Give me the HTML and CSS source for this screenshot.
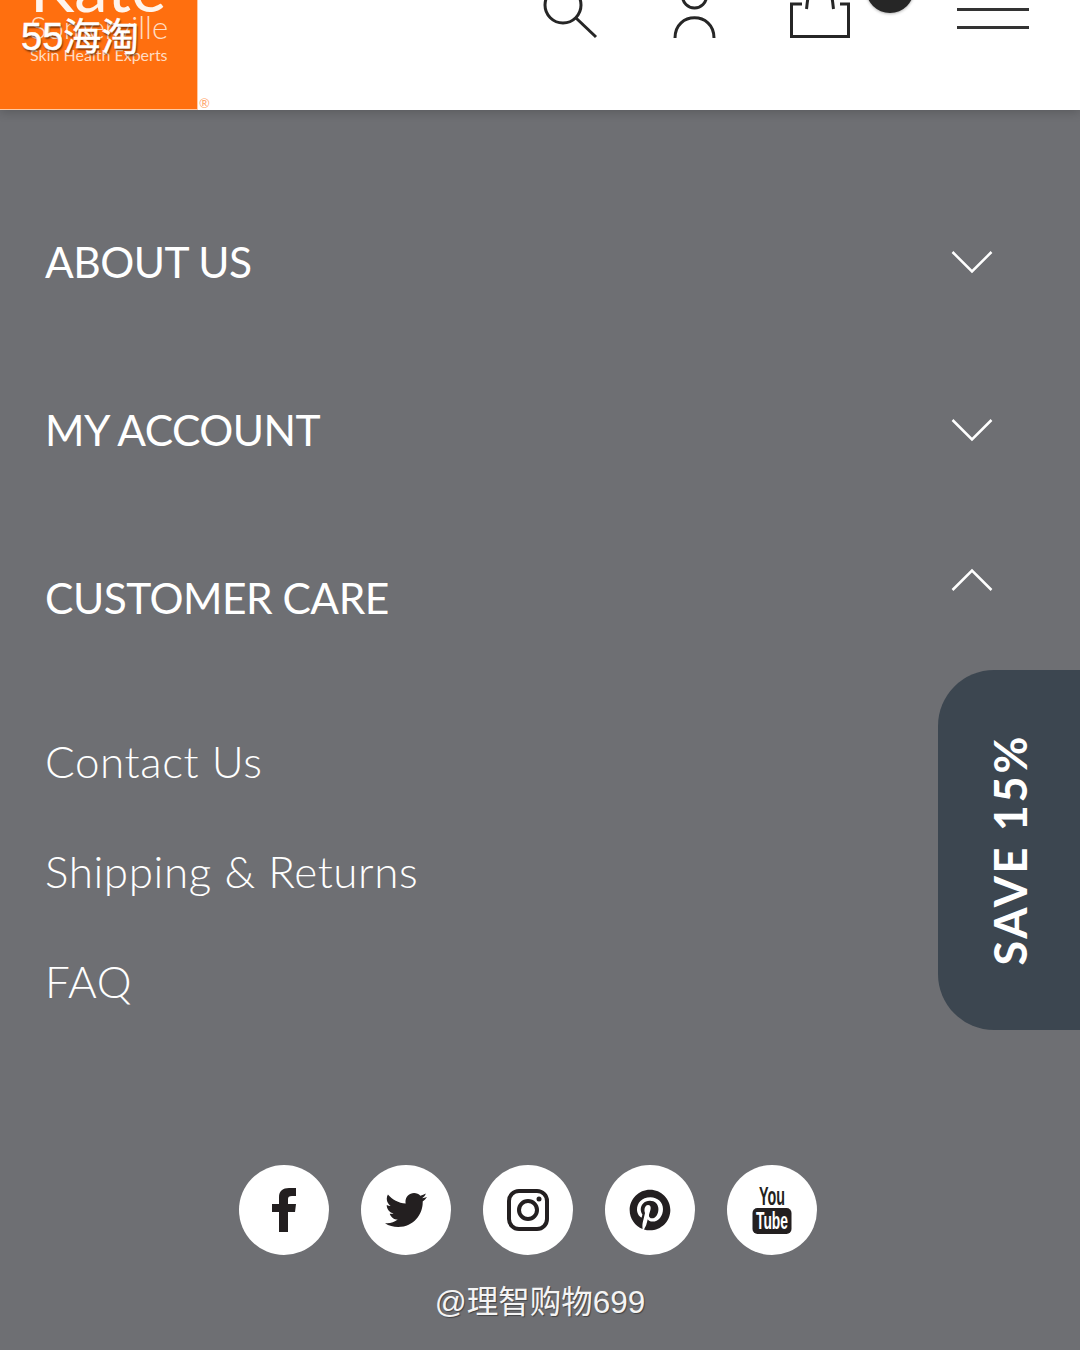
FILE: index.html
```html
<!DOCTYPE html>
<html lang="en">
<head>
    <meta charset="UTF-8">
    <meta name="viewport" content="width=device-width, initial-scale=1.0">
    <title>Kate Somerville</title>
    <link rel="stylesheet" href="styles.css">
</head>
<body>
    <header class="site-header">
        <a class="logo">
            <span class="logo-kate">Kate</span>
            <span class="logo-name">Somerville</span>
            <span class="logo-tag">Skin Health Experts</span>
        </a>
        <span class="logo-reg">®</span>
        <span class="watermark-top">55海淘</span>

        <div class="header-icons">
            <svg class="icon-search" width="60" height="40" viewBox="0 0 60 40">
                <circle cx="23" cy="5" r="18" />
                <path d="M36 18 L56 37" />
            </svg>
            <svg class="icon-user" width="50" height="40" viewBox="0 0 50 40">
                <circle cx="24.500" cy="-4" r="12" />
                <path d="M5 38 C5 11 44 11 44 38" />
            </svg>
            <div class="cart">
                <svg width="68" height="40" viewBox="0 0 68 40">
                    <path d="M16 4 H5.500 V36.500 H62.500 V4 H54" />
                    <path d="M20.500 9 C21 6 21 3 22 -2 M46 -2 C47 3 47 6 47.500 9" />
                </svg>
                <span class="cart-count"></span>
            </div>
            <div class="burger">
                <span></span>
                <span></span>
            </div>
        </div>
    </header>

    <main class="footer-menu">
        <div class="menu-row">
            <h2>ABOUT US</h2>
            <svg class="chevron" width="42" height="24" viewBox="0 0 42 24"><path d="M1.500 2 L21 21.500 L40.500 2" /></svg>
        </div>
        <div class="menu-row">
            <h2>MY ACCOUNT</h2>
            <svg class="chevron" width="42" height="24" viewBox="0 0 42 24"><path d="M1.500 2 L21 21.500 L40.500 2" /></svg>
        </div>
        <div class="menu-row">
            <h2>CUSTOMER CARE</h2>
            <svg class="chevron chevron-up" width="42" height="24" viewBox="0 0 42 24"><path d="M1.500 22 L21 2.500 L40.500 22" /></svg>
        </div>

        <ul class="menu-links">
            <li>Contact Us</li>
            <li>Shipping &amp; Returns</li>
            <li>FAQ</li>
        </ul>

        <div class="socials">
            <a class="social">
                <svg width="24" height="44" viewBox="0 0 24 44"><path d="M7 44V24H0v-8h7V9C7 3 11 0 17 0h7v8h-4c-3 0-4 1-4 3v5h8l-1 8h-7v20z" /></svg>
            </a>
            <a class="social">
                <svg width="42" height="42" viewBox="0 0 512 512"><path d="M459.37 151.716c.325 4.548.325 9.097.325 13.645 0 138.72-105.583 298.558-298.558 298.558-59.452 0-114.68-17.219-161.137-47.106 8.447.974 16.568 1.299 25.34 1.299 49.055 0 94.213-16.568 130.274-44.832-46.132-.975-84.792-31.188-98.112-72.772 6.498.974 12.995 1.624 19.818 1.624 9.421 0 18.843-1.3 27.614-3.573-48.081-9.747-84.143-51.98-84.143-102.985v-1.299c13.969 7.797 30.214 12.67 47.431 13.319-28.264-18.843-46.781-51.005-46.781-87.391 0-19.492 5.197-37.36 14.294-52.954 51.655 63.675 129.3 105.258 216.365 109.807-1.624-7.797-2.599-15.918-2.599-24.04 0-57.828 46.782-104.934 104.934-104.934 30.213 0 57.502 12.67 76.67 33.137 23.715-4.548 46.456-13.32 66.599-25.34-7.798 24.366-24.366 44.833-46.132 57.827 21.117-2.273 41.584-8.122 60.426-16.243-14.292 20.791-32.161 39.308-52.628 54.253z" /></svg>
            </a>
            <a class="social">
                <svg class="icon-insta" width="42" height="42" viewBox="0 0 42 42">
                    <rect x="2" y="2" width="38" height="38" rx="10" />
                    <circle cx="21" cy="21" r="9" />
                    <circle class="dot" cx="32" cy="10" r="2.500" />
                </svg>
            </a>
            <a class="social">
                <svg width="42" height="42" viewBox="0 0 496 512"><path d="M496 256c0 137-111 248-248 248-25.600 0-50.200-3.900-73.400-11.100 10.100-16.500 25.200-43.500 30.800-65 3-11.600 15.400-59 15.400-59 8.100 15.400 31.700 28.500 56.800 28.500 74.800 0 128.700-68.800 128.700-154.300 0-81.900-66.900-143.200-152.900-143.200-107 0-163.900 71.800-163.900 150.100 0 36.400 19.400 81.700 50.300 96.100 4.700 2.200 7.200 1.200 8.300-3.300.8-3.400 5-20.300 6.900-28.100.6-2.500.3-4.700-1.700-7.100-10.100-12.500-18.300-35.300-18.300-56.600 0-54.700 41.400-107.600 112-107.600 60.900 0 103.600 41.500 103.600 100.900 0 67.100-33.900 113.600-78 113.600-24.300 0-42.600-20.100-36.700-44.800 7-29.500 20.500-61.300 20.500-82.600 0-19-10.200-34.900-31.400-34.900-24.900 0-44.900 25.700-44.900 60.200 0 22 7.400 36.800 7.400 36.800s-24.500 103.800-29 123.200c-5 21.400-3 51.600-.9 71.200C65.400 450.900 0 361.100 0 256 0 119 111 8 248 8s248 111 248 248z" /></svg>
            </a>
            <a class="social">
                <svg class="icon-youtube" width="40" height="48" viewBox="0 0 40 48">
                    <text class="yt-you" x="20" y="19" text-anchor="middle" textLength="26" lengthAdjust="spacingAndGlyphs">You</text>
                    <rect x="0.500" y="22" width="39" height="26" rx="5" />
                    <text class="yt-tube" x="20" y="43" text-anchor="middle" textLength="32" lengthAdjust="spacingAndGlyphs">Tube</text>
                </svg>
            </a>
        </div>

        <p class="watermark-bottom">@理智购物699</p>
    </main>

    <aside class="save-tab"><span>SAVE 15%</span></aside>
</body>
</html>
```

FILE: styles.css
```css
* {
    box-sizing: border-box;
}
body {
    margin: 0;
    width: 1080px;
    height: 1350px;
    overflow: hidden;
    position: relative;
    font-family: Lato, Arial, sans-serif;
    background-color: #6e6f73;
    color: white;
}

/* header */
.site-header {
    height: 110px;
    display: flex;
    position: relative;
    z-index: 2;
    overflow: hidden;
    background-color: white;
    box-shadow: 0 2px 10px rgba(0, 0, 0, 0.2);
}
.logo {
    width: 198px;
    height: 110px;
    padding: 0 0 45px 30px;
    display: flex;
    flex-direction: column;
    justify-content: flex-end;
    background-color: #ff6f0f;
    border-right: 1px solid #ffc9a3;
    border-bottom: 1px solid #ffc9a3;
    color: #ffdcc2;
    white-space: nowrap;
    overflow: hidden;
}
.logo-kate {
    font-size: 67px;
    line-height: 52px;
    color: #fff4ec;
}
.logo-name {
    margin-bottom: 4px;
    font-size: 31px;
    font-weight: 300;
    line-height: 30px;
}
.logo-tag {
    font-size: 16px;
    line-height: 18px;
}
.logo-reg {
    position: absolute;
    left: 199px;
    top: 97px;
    font-size: 13px;
    line-height: 13px;
    color: #ffa76e;
}
.watermark-top {
    position: absolute;
    left: 21px;
    top: 14px;
    font-family: "Liberation Sans", "Noto Sans CJK SC", sans-serif;
    font-size: 38px;
    line-height: 46px;
    -webkit-text-stroke: 0.5px white;
    text-shadow: 1px 2px 2px rgba(0, 0, 0, 0.55);
}
.header-icons {
    display: flex;
    align-items: flex-start;
    position: absolute;
    left: 540px;
    top: 0;
}
.header-icons svg {
    display: block;
    fill: none;
    stroke: #262626;
    stroke-width: 3;
}
.icon-search {
    margin-right: 70px;
}
.icon-user {
    margin-right: 66px;
}
.cart {
    width: 68px;
    margin-right: 103px;
    position: relative;
}
.cart-count {
    position: absolute;
    left: 80px;
    top: -35px;
    width: 48px;
    height: 48px;
    border-radius: 50%;
    background-color: #262626;
    box-shadow: 0 1px 3px rgba(0, 0, 0, 0.3);
}
.burger {
    width: 72px;
    padding-top: 8px;
}
.burger span {
    display: block;
    height: 3px;
    margin-bottom: 15px;
    background-color: #333;
}

/* accordion */
.footer-menu {
    display: flex;
    flex-direction: column;
    padding-top: 68px;
}
.menu-row {
    height: 168px;
    padding: 0 87px 0 45px;
    display: flex;
    justify-content: space-between;
    align-items: center;
}
.menu-row h2 {
    margin: 0 0 2px;
    font-size: 42.500px;
    font-weight: 400;
    letter-spacing: -0.5px;
}
.chevron {
    fill: none;
    stroke: white;
    stroke-width: 2.500;
}
.chevron-up {
    margin-bottom: 36px;
}
.menu-links {
    list-style: none;
    margin: 0;
    padding: 24px 0 0 45px;
}
.menu-links li {
    height: 110px;
    line-height: 110px;
    font-size: 44px;
    font-weight: 300;
    letter-spacing: 0.6px;
}

/* social */
.socials {
    display: flex;
    gap: 32px;
    margin: 129px 0 0 239px;
}
.social {
    width: 90px;
    height: 90px;
    border-radius: 50%;
    display: flex;
    align-items: center;
    justify-content: center;
    background-color: white;
}
.social svg {
    display: block;
    fill: #231f20;
}
.icon-insta rect,
.icon-insta circle {
    fill: none;
    stroke: #231f20;
    stroke-width: 4;
}
.icon-insta .dot {
    fill: #231f20;
    stroke: none;
}
.icon-youtube {
    overflow: visible;
}
.yt-you,
.yt-tube {
    font-family: "Liberation Sans", sans-serif;
    font-weight: 700;
}
.yt-you {
    font-size: 26px;
}
.yt-tube {
    font-size: 23px;
    fill: white;
}
.watermark-bottom {
    margin: 26px 0 0;
    text-align: center;
    font-family: "Liberation Sans", "Noto Sans CJK SC", sans-serif;
    font-size: 31.500px;
    line-height: 42px;
    color: #f4f4f4;
    text-shadow: 1px 1px 1px rgba(0, 0, 0, 0.4);
}

/* side tab */
.save-tab {
    position: absolute;
    right: 0;
    top: 670px;
    z-index: 3;
    width: 142px;
    height: 360px;
    display: flex;
    align-items: center;
    justify-content: center;
    padding-left: 1px;
    border-radius: 56px 0 0 56px;
    background-color: #3c4650;
}
.save-tab span {
    writing-mode: vertical-rl;
    transform: rotate(180deg);
    font-size: 45px;
    font-weight: 700;
    letter-spacing: 2.700px;
    white-space: nowrap;
}
```
